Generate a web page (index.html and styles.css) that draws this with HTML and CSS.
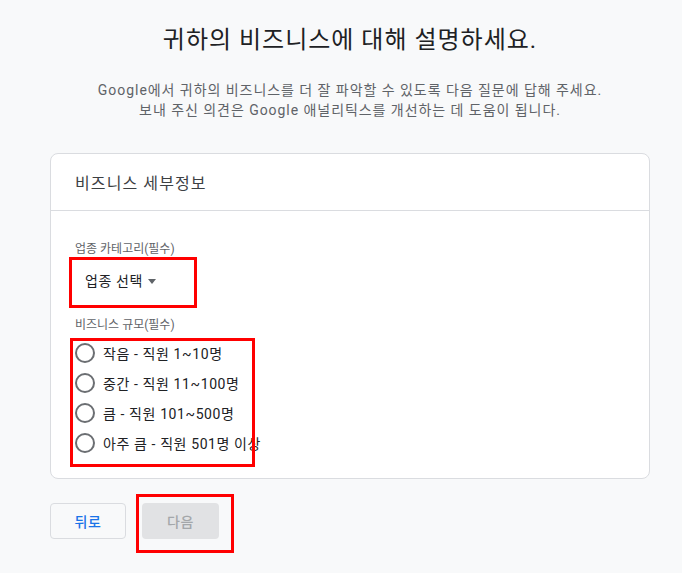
FILE: index.html
```html
<!DOCTYPE html>
<html lang="ko">
<head>
<meta charset="utf-8">
<title>비즈니스 설명</title>
<link rel="stylesheet" href="styles.css">
</head>
<body>
<main class="page">
  <h1 class="title">귀하의 비즈니스에 대해 설명하세요.</h1>
  <p class="subtitle">Google에서 귀하의 비즈니스를 더 잘 파악할 수 있도록 다음 질문에 답해 주세요.<br>보내 주신 의견은 Google 애널리틱스를 개선하는 데 도움이 됩니다.</p>

  <section class="card">
    <div class="card-header">비즈니스 세부정보</div>
    <div class="card-body">
      <div class="label">업종 카테고리(필수)</div>
      <div class="select">업종 선택 <span class="caret"></span></div>
      <div class="label label-size">비즈니스 규모(필수)</div>
      <div class="radios">
        <div class="radio-row"><span class="radio"></span><span>작음 - 직원 1~10명</span></div>
        <div class="radio-row"><span class="radio"></span><span>중간 - 직원 11~100명</span></div>
        <div class="radio-row"><span class="radio"></span><span>큼 - 직원 101~500명</span></div>
        <div class="radio-row"><span class="radio"></span><span>아주 큼 - 직원 501명 이상</span></div>
      </div>
    </div>
  </section>

  <div class="actions">
    <button class="btn btn-back">뒤로</button>
    <button class="btn btn-next" disabled>다음</button>
  </div>
</main>

<div class="mark mark-select"></div>
<div class="mark mark-radios"></div>
<div class="mark mark-next"></div>
</body>
</html>
```

FILE: styles.css
```css
html, body {
  margin: 0;
  padding: 0;
  background: #f8f9fa;
}

body {
  font-family: Roboto, "Noto Sans CJK KR", sans-serif;
  color: #202124;
  position: relative;
  min-height: 573px;
}

.page {
  width: 600px;
  margin-left: 50px;
  padding-top: 24px;
}

.title {
  margin: 0;
  font-size: 24px;
  line-height: 32px;
  font-weight: 400;
  letter-spacing: 1px;
  text-align: center;
  color: #202124;
}

.subtitle {
  margin: 24px 0 0;
  font-size: 14px;
  line-height: 20px;
  letter-spacing: 0.95px;
  text-align: center;
  color: #5f6368;
}

.card {
  margin-top: 33px;
  background: #fff;
  border: 1px solid #dadce0;
  border-radius: 8px;
}

.card-header {
  height: 56px;
  display: flex;
  align-items: center;
  padding: 0 24px;
  font-size: 16px;
  letter-spacing: 1.1px;
  color: #3c4043;
  border-bottom: 1px solid #dadce0;
}

.card-body {
  padding: 30px 24px 20px;
}

.label {
  font-size: 12px;
  line-height: 16px;
  color: #5f6368;
}

.select {
  margin-top: 14px;
  padding-left: 10px;
  font-size: 14px;
  line-height: 20px;
  letter-spacing: 0.6px;
  color: #202124;
  display: flex;
  align-items: center;
  gap: 4px;
}

.caret {
  width: 0;
  height: 0;
  border-left: 4.5px solid transparent;
  border-right: 4.5px solid transparent;
  border-top: 5px solid #5f6368;
  margin-left: 1px;
}

.label-size {
  margin-top: 26px;
}

.radios {
  margin-top: 5px;
}

.radio-row {
  height: 30px;
  display: flex;
  align-items: center;
  gap: 8px;
  font-size: 14px;
  letter-spacing: 0.6px;
  color: #202124;
}

.radio {
  width: 16px;
  height: 16px;
  border: 2px solid #6b6e72;
  border-radius: 50%;
  flex: none;
}

.actions {
  margin-top: 24px;
  display: flex;
  gap: 16px;
}

.btn {
  height: 36px;
  border-radius: 4px;
  font-family: Roboto, "Noto Sans CJK KR", sans-serif;
  font-size: 14px;
  font-weight: 500;
  letter-spacing: 0.5px;
  padding: 0;
}

.btn-back {
  width: 76px;
  background: #f8f9fa;
  border: 1px solid #dadce0;
  color: #1a73e8;
}

.btn-next {
  width: 77px;
  background: #e1e2e4;
  border: none;
  color: #a4a7aa;
}

.mark {
  position: absolute;
  border: 3px solid #ff0000;
  box-sizing: border-box;
}

.mark-select {
  left: 69px;
  top: 257px;
  width: 128px;
  height: 51px;
}

.mark-radios {
  left: 70px;
  top: 338px;
  width: 185px;
  height: 129px;
}

.mark-next {
  left: 136px;
  top: 494px;
  width: 98px;
  height: 59px;
}
```
